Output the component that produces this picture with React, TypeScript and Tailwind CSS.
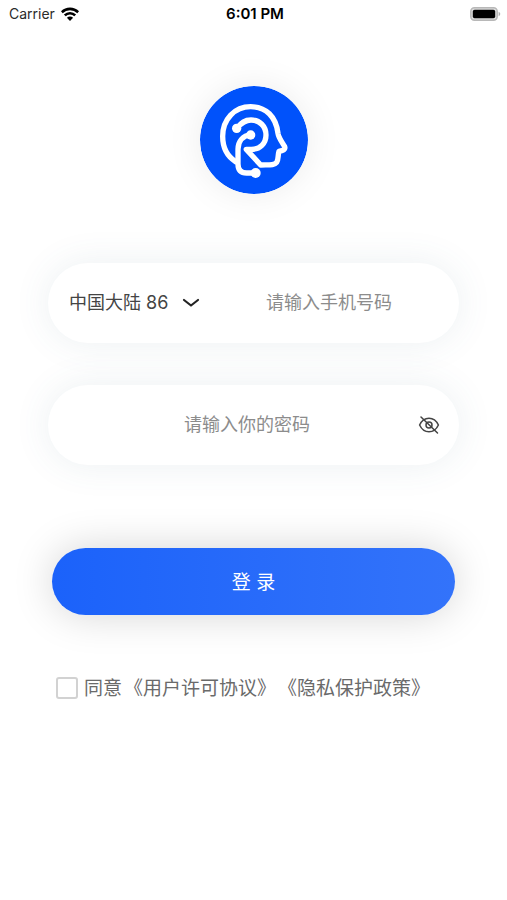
import React, { useState } from 'react';

const StatusBar: React.FC = () => (
  <header className="grid h-7 grid-cols-3 items-center pr-1.5 pl-[9px] text-sm text-black">
    <div className="flex items-center gap-1.5">
      <span className="text-[#2b2b2b]">Carrier</span>
      <svg className="h-[14px] w-[18px]" viewBox="0 0 18 14" aria-hidden="true">
        <path
          d="M.8 5.2C5.4.8 12.6.8 17.2 5.2M3.8 8.4c2.9-2.9 7.5-2.9 10.4 0"
          fill="none"
          stroke="#000"
          strokeWidth="2.6"
        />
        <path d="M9 14 5.9 10.8c1.7-1.6 4.5-1.6 6.2 0z" fill="#000" />
      </svg>
    </div>
    <span className="text-center text-[15px] font-semibold">6:01 PM</span>
    <svg className="h-[14px] w-[31px] justify-self-end" viewBox="0 0 31 14" aria-hidden="true">
      <rect x="0.8" y="0.8" width="26.4" height="12.4" rx="3.6" fill="#ddd" stroke="#b8b8b8" strokeWidth="1.5" />
      <rect x="2.8" y="2.8" width="22.4" height="8.4" rx="1.8" fill="#000" />
      <path d="M28.6 4.8c2.2.8 2.2 3.6 0 4.4z" fill="#b0b0b0" />
    </svg>
  </header>
);

const Logo: React.FC = () => (
  <svg
    className="size-[108px] rounded-full shadow-[0_0_36px_rgba(0,0,0,0.08)]"
    viewBox="30 30 324 324"
    role="img"
    aria-label="Logo"
  >
    <circle cx="192" cy="192" r="162" fill="#0052fb" />
    <g fill="none" stroke="#fff" strokeWidth="16" strokeLinejoin="round" strokeLinecap="round">
      <path d="M137 257C110 240 98 213 98 181C98 130 134 92 182 92C228 92 258 122 264 172C266 186 276 198 284 212C286 217 283 222 278 223L267 226C263 239 266 250 260 259C252 269 236 266 212 267L169 220H184C210 220 228 202 228 177C228 151 209 132 183 132C164 132 154 141 142 155" />
      <path d="M183 176C158 179 144 196 144 220V264C144 282 152 291 170 291H197" />
    </g>
    <g fill="#fff">
      <circle cx="140" cy="157" r="14" />
      <circle cx="182" cy="177" r="14" />
      <circle cx="197" cy="291" r="15" />
    </g>
  </svg>
);

const LoginPage: React.FC = () => {
  const [region, setRegion] = useState('86');
  const [phone, setPhone] = useState('');
  const [password, setPassword] = useState('');
  const [showPassword, setShowPassword] = useState(false);
  const [agreed, setAgreed] = useState(false);

  return (
    <form className="flex flex-col px-12 pt-[58px]" onSubmit={(e) => e.preventDefault()}>
      <div className="flex justify-center">
        <Logo />
      </div>

      <div className="mt-[69px] flex h-20 items-center rounded-full bg-white pr-0.5 pl-[21px] shadow-[0_0_36px_rgba(70,110,130,0.1)]">
        <div className="relative w-[132px]">
          <select
            aria-label="国家或地区"
            value={region}
            onChange={(e) => setRegion(e.target.value)}
            className="w-full appearance-none bg-transparent text-lg text-[#444] outline-none"
          >
            <option value="86">中国大陆 86</option>
          </select>
          <svg
            className="pointer-events-none absolute top-1/2 right-0 h-3 w-5 -translate-y-1/2"
            viewBox="0 0 20 12"
            aria-hidden="true"
          >
            <path
              d="m3 3 7 5.5L17 3"
              fill="none"
              stroke="#222"
              strokeWidth="2.2"
              strokeLinecap="round"
              strokeLinejoin="round"
            />
          </svg>
        </div>
        <input
          type="tel"
          aria-label="手机号码"
          placeholder="请输入手机号码"
          value={phone}
          onChange={(e) => setPhone(e.target.value)}
          className="min-w-0 flex-1 text-center text-lg text-[#444] outline-none placeholder:text-[#8c8c8c]"
        />
      </div>

      <div className="mt-[42px] flex h-20 items-center rounded-full bg-white pr-[19px] pl-7 shadow-[0_0_36px_rgba(70,110,130,0.1)]">
        <input
          type={showPassword ? 'text' : 'password'}
          aria-label="密码"
          placeholder="请输入你的密码"
          value={password}
          onChange={(e) => setPassword(e.target.value)}
          className="min-w-0 flex-1 text-center text-lg text-[#444] outline-none placeholder:text-[#8c8c8c]"
        />
        <button type="button" aria-label="显示密码" onClick={() => setShowPassword(!showPassword)}>
          <svg className="h-5 w-[22px]" viewBox="0 0 22 20" fill="none" stroke="#444" strokeWidth="1.5" aria-hidden="true">
            <path d="M1.6 10C3.6 5.7 7 3.2 11 3.2S18.4 5.7 20.4 10C18.4 14.3 15 16.8 11 16.8S3.6 14.3 1.6 10z" />
            <circle cx="11" cy="10" r="3" />
            <path d="m3 2 16.5 16" strokeLinecap="round" />
          </svg>
        </button>
      </div>

      <button
        type="submit"
        className="mx-1 mt-[83px] h-[67px] rounded-full bg-linear-to-r from-[#1b62fa] to-[#3373fa] pt-1 text-[19px] text-white shadow-[0_0_40px_rgba(0,0,0,0.17)]"
      >
        登 录
      </button>

      <div className="mt-[58px] ml-2 flex items-center gap-1.5 text-[19px] leading-7 whitespace-nowrap text-[#6a6a6a]">
        <input
          id="agree"
          type="checkbox"
          checked={agreed}
          onChange={(e) => setAgreed(e.target.checked)}
          className="size-[22px] appearance-none rounded-[3px] border-2 border-[#d2d2d2] bg-white checked:bg-[#1b62fa]"
        />
        <div className="flex gap-0.5 pt-0.5">
          <label htmlFor="agree">同意</label>
          <a href="#license">《用户许可协议》</a>
          <a href="#privacy">《隐私保护政策》</a>
        </div>
      </div>
    </form>
  );
};

const App: React.FC = () => (
  <div className="min-h-screen bg-white font-[Inter,'Noto_Sans_CJK_SC',sans-serif]">
    <StatusBar />
    <LoginPage />
  </div>
);

export default App;
